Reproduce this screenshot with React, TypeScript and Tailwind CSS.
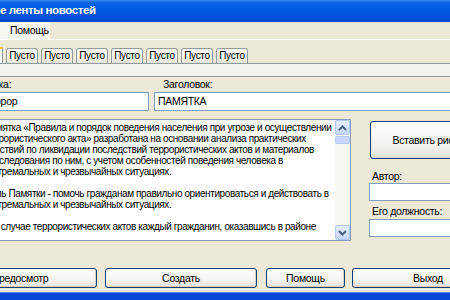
import clsx from 'clsx';

const lines = [
  'Памятка «Правила и порядок поведения населения при угрозе и осуществлении',
  'террористического акта» разработана на основании анализа практических',
  'действий по ликвидации последствий террористических актов и материалов',
  'расследования по ним, с учетом особенностей поведения человека в',
  'экстремальных и чрезвычайных ситуациях.',
  '',
  'Цель Памятки - помочь гражданам правильно ориентироваться и действовать в',
  'экстремальных и чрезвычайных ситуациях.',
  '',
  'В случае террористических актов каждый гражданин, оказавшись в районе',
];

const Tab = ({ label }: { label: string }) => (
  <div className="flex h-[15px] w-[32px] shrink-0 items-center justify-center rounded-t-[3px] border border-b-0 border-[#919b9c] bg-[linear-gradient(to_bottom,#ffffff,#f3f2ec_60%,#e6e4da)] text-[10px] leading-none tracking-[-0.3px] text-black">
    {label}
  </div>
);

const XpButton = ({
  label,
  className,
}: {
  label: string;
  className?: string;
}) => (
  <div
    className={clsx(
      'flex shrink-0 items-center justify-center rounded-[3px] border border-[#003c74] bg-[linear-gradient(to_bottom,#ffffff,#f5f4f0_55%,#e6e4dc)] text-[10.5px] leading-none tracking-[-0.3px] text-black shadow-[inset_-1px_-1px_0_#d6d0c5]',
      className,
    )}
  >
    {label}
  </div>
);

const ScrollButton = ({ up }: { up?: boolean }) => (
  <div className="flex h-[15px] w-[15px] items-center justify-center rounded-[2px] border border-[#b4c8f6] bg-[linear-gradient(to_bottom,#e6eefc,#c6d6fc)]">
    <svg width="9" height="6" viewBox="0 0 9 6">
      <path
        d={up ? 'M1 5 L4.5 1.5 L8 5' : 'M1 1 L4.5 4.5 L8 1'}
        fill="none"
        stroke="#4d6185"
        strokeWidth="2"
      />
    </svg>
  </div>
);

export default function App() {
  return (
    <div className="flex h-[300px] w-[450px] flex-col overflow-hidden bg-[#ece9d8] font-['Liberation_Sans',Arial,sans-serif] text-black">
      {/* title bar */}
      <div className="flex h-[22px] shrink-0 items-center bg-[linear-gradient(to_bottom,#3b8cf7_0%,#0d62e8_12%,#0058e4_45%,#0052dc_80%,#0045c4_100%)] text-[11.5px] font-bold tracking-[-0.4px] whitespace-nowrap text-white">
        е ленты новостей
      </div>

      {/* menu */}
      <div className="flex h-[18px] shrink-0 border-b border-white">
        <div className="flex w-[50px] items-center bg-[#f7f6f1] pl-[10px] text-[10.5px] tracking-[-0.3px]">
          Помощь
        </div>
      </div>

      {/* tabs */}
      <div className="mt-[7px] flex h-[16px] shrink-0 items-end gap-[3px]">
        <div className="h-[16px] w-[3px] shrink-0 border-t-2 border-r border-t-[#ffc83c] border-r-[#919b9c] bg-[#fcfcfe]" />
        <Tab label="Пусто" />
        <Tab label="Пусто" />
        <Tab label="Пусто" />
        <Tab label="Пусто" />
        <Tab label="Пусто" />
        <Tab label="Пусто" />
        <Tab label="Пусто" />
      </div>
      <div className="h-[14px] shrink-0 border-y border-[#919b9c] bg-[#f4f3ee]" />

      {/* title fields */}
      <div className="flex shrink-0 gap-[5px] text-[10.5px] tracking-[-0.3px]">
        <div className="-ml-[39px] flex w-[188px] shrink-0 flex-col">
          <div className="flex h-[15px] items-center pl-[9px]">Рубрика:</div>
          <div className="flex h-[19px] items-center border border-[#7f9db9] bg-white pl-[22px]">
            Террор
          </div>
        </div>
        <div className="flex w-[310px] shrink-0 flex-col">
          <div className="flex h-[15px] items-center pl-[9px]">Заголовок:</div>
          <div className="flex h-[19px] items-center border border-[#7f9db9] bg-white pl-[3px]">
            ПАМЯТКА
          </div>
        </div>
      </div>

      {/* main area */}
      <div className="mt-[8px] flex h-[122px] shrink-0 gap-[18px]">
        <div className="-ml-[22px] flex w-[373px] shrink-0 border border-[#7f9db9] bg-white">
          <div className="flex-1 overflow-hidden pt-[2px] pl-[5px] text-[10px] leading-[11px] tracking-[-0.4px] whitespace-nowrap">
            {lines.map((line, i) => (
              <div key={i} className={clsx('h-[11px]', i === 9 && 'pl-[8px]')}>
                {line}
              </div>
            ))}
          </div>
          <div className="flex w-[15px] shrink-0 flex-col bg-[#f7f7f2]">
            <ScrollButton up />
            <div className="mt-px h-[8px] rounded-[2px] border border-[#b4c8f6] bg-[#c9d8fb]" />
            <div className="flex-1" />
            <ScrollButton />
          </div>
        </div>

        <div className="flex w-[140px] shrink-0 flex-col text-[10.5px] tracking-[-0.3px]">
          <XpButton label="Вставить рисунок" className="mt-[2px] ml-px h-[38px] w-[126px]" />
          <div className="mt-[12px] flex h-[12px] items-center pl-[3px]">Автор:</div>
          <div className="h-[18px] border border-[#7f9db9] bg-white" />
          <div className="mt-[5px] flex h-[12px] items-center pl-[3px]">
            Его должность:
          </div>
          <div className="mt-px h-[18px] border border-[#7f9db9] bg-white" />
        </div>
      </div>

      {/* bottom buttons */}
      <div className="mt-[27px] flex shrink-0">
        <XpButton label="Предосмотр" className="-ml-[57px] h-[20px] w-[154px]" />
        <XpButton label="Создать" className="ml-[8px] h-[20px] w-[152px]" />
        <XpButton label="Помощь" className="ml-[9px] h-[20px] w-[79px]" />
        <XpButton label="Выход" className="ml-[7px] h-[20px] w-[152px]" />
      </div>

      <div className="flex-1" />
      <div className="h-[8px] shrink-0 border-t border-[#5a86e8] bg-[#0a46d6]" />
    </div>
  );
}
